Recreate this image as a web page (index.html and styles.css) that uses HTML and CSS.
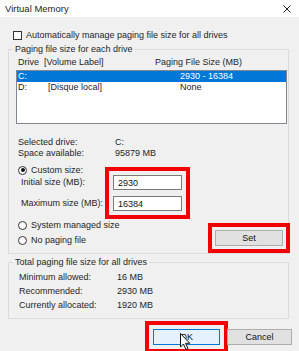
FILE: index.html
```html
<!DOCTYPE html>
<html lang="en">
<head>
    <meta charset="UTF-8">
    <meta name="viewport" content="width=device-width, initial-scale=1.0">
    <title>Virtual Memory</title>
    <link rel="stylesheet" href="styles.css">
</head>
<body>
    <div class="titlebar">
        <span class="title">Virtual Memory</span>
        <svg class="close" width="8" height="8" viewBox="0 0 8 8">
            <path d="M0.5 0.5 L7.5 7.5 M7.5 0.5 L0.5 7.5" stroke="#222" stroke-width="1" fill="none"/>
        </svg>
    </div>

    <div class="content">
        <label class="check-row">
            <span class="checkbox"></span>
            Automatically manage paging file size for all drives
        </label>

        <fieldset class="group group-drives">
            <legend>Paging file size for each drive</legend>

            <div class="list-head">
                <span>Drive&nbsp; [Volume Label]</span>
                <span>Paging File Size (MB)</span>
            </div>
            <div class="listbox">
                <div class="list-row selected">
                    <span>C:</span><span></span><span>2930 - 16384</span>
                </div>
                <div class="list-row">
                    <span>D:</span><span>[Disque local]</span><span>None</span>
                </div>
            </div>

            <div class="info">
                <span>Selected drive:</span><span>C:</span>
                <span>Space available:</span><span>95879 MB</span>
            </div>

            <label class="radio-row radio-custom">
                <span class="radio checked"></span>Custom size:
            </label>

            <div class="sizes">
                <div class="size-labels">
                    <span>Initial size (MB):</span>
                    <span>Maximum size (MB):</span>
                </div>
                <div class="size-inputs">
                    <input type="text" value="2930">
                    <input type="text" value="16384">
                </div>
            </div>

            <div class="bottom-row">
                <div class="radios">
                    <label class="radio-row"><span class="radio"></span>System managed size</label>
                    <label class="radio-row"><span class="radio"></span>No paging file</label>
                </div>
                <button class="btn btn-set">Set</button>
            </div>
        </fieldset>

        <fieldset class="group group-total">
            <legend>Total paging file size for all drives</legend>
            <div class="totals">
                <span>Minimum allowed:</span><span>16 MB</span>
                <span>Recommended:</span><span>2930 MB</span>
                <span>Currently allocated:</span><span>1920 MB</span>
            </div>
        </fieldset>

        <div class="actions">
            <button class="btn btn-ok">OK</button>
            <button class="btn">Cancel</button>
        </div>
    </div>

    <!-- mouse pointer over OK -->
    <svg class="cursor" width="11" height="18" viewBox="0 0 11 18">
        <path d="M0.5 0.5 L0.5 14 L3.5 11 L6 16.5 L8 15.6 L5.6 10.3 L9.8 10.3 Z" fill="#fff" stroke="#111" stroke-width="1" stroke-linejoin="round"/>
    </svg>
</body>
</html>
```

FILE: styles.css
```css
* {
    box-sizing: border-box;
}

body {
    margin: 0;
    width: 299px;
    height: 351px;
    overflow: hidden;
    position: relative;
    background: #f0f0f0;
    color: #1e1e1e;
    font-family: "Liberation Sans", Arial, sans-serif;
    font-size: 9px;
    line-height: 12px;
}

.titlebar {
    height: 17px;
    background: #fff;
    display: flex;
    align-items: center;
    justify-content: space-between;
    padding: 0 8px 0 5px;
    font-size: 9.5px;
}

.content {
    padding: 12px 10px 0 8px;
}

.check-row {
    display: flex;
    align-items: center;
    gap: 4px;
    height: 12px;
    padding-left: 5px;
}

.checkbox {
    width: 9px;
    height: 9px;
    border: 1px solid #333;
    background: #fff;
}

.group {
    margin: 2px 0 0;
    padding: 0 4px;
    border: 1px solid #dcdcdc;
    min-width: 0;
}

.group legend {
    padding: 0 2px;
    line-height: 12px;
}

.list-head {
    display: grid;
    grid-template-columns: 137px 1fr;
    margin: 1px 0 0 5px;
}

.listbox {
    margin: 2px -3px 0 3px;
    height: 54px;
    background: #fff;
    border: 1px solid #828790;
}

.list-row {
    display: grid;
    grid-template-columns: 30px 132px 1fr;
    height: 11px;
    line-height: 11px;
    padding-left: 1px;
}

.list-row.selected {
    background: #0078d7;
    color: #fff;
}

.info {
    display: grid;
    grid-template-columns: 97px 1fr;
    margin: 13px 0 0 5px;
    line-height: 11px;
}

.radio-row {
    display: flex;
    align-items: center;
    gap: 4px;
    height: 12px;
    padding-left: 5px;
}

.radio {
    width: 9px;
    height: 9px;
    border: 1px solid #333;
    border-radius: 50%;
    background: #fff;
    position: relative;
}

.radio.checked::after {
    content: "";
    position: absolute;
    left: 1.5px;
    top: 1.5px;
    width: 4px;
    height: 4px;
    border-radius: 50%;
    background: #111;
}

.radio-custom {
    margin-top: 6px;
    height: 10px;
}

.sizes {
    display: flex;
}

.size-labels {
    flex: 0 0 100px;
    padding-left: 8px;
    display: flex;
    flex-direction: column;
    gap: 6px;
    white-space: nowrap;
}

.size-labels span {
    height: 15px;
    line-height: 15px;
}

.size-inputs {
    display: flex;
    flex-direction: column;
    gap: 6px;
    outline: 4px solid #f20000;
    outline-offset: 4px;
}

.size-inputs input {
    width: 69px;
    height: 15px;
    border: 1px solid #7a7a7a;
    background: #fff;
    font: inherit;
    padding: 0 4px;
    color: #111;
}

.bottom-row {
    display: flex;
    justify-content: space-between;
    align-items: flex-end;
    margin-top: 8px;
    padding-bottom: 7px;
}

.radios {
    display: flex;
    flex-direction: column;
    gap: 3px;
}

.btn {
    height: 16px;
    padding: 0;
    background: #e1e1e1;
    border: 1px solid #adadad;
    font: inherit;
    color: #111;
}

.btn-set {
    width: 68px;
    margin-right: 1px;
    outline: 4px solid #f20000;
    outline-offset: 3px;
}

.group-total {
    margin-top: 2px;
}

.totals {
    display: grid;
    grid-template-columns: 98px 1fr;
    margin: 2px 0 0 6px;
    padding-bottom: 6px;
}

.totals span {
    line-height: 14px;
}

.actions {
    display: flex;
    justify-content: flex-end;
    gap: 7px;
    margin: 10px -3px 0 0;
}

.actions .btn {
    width: 65px;
}

.actions .btn-ok {
    width: 67px;
    background: #e5f1fb;
    border-color: #0078d7;
    outline: 4px solid #f20000;
    outline-offset: 4px;
}

.cursor {
    position: absolute;
    left: 180px;
    top: 333px;
}
```
